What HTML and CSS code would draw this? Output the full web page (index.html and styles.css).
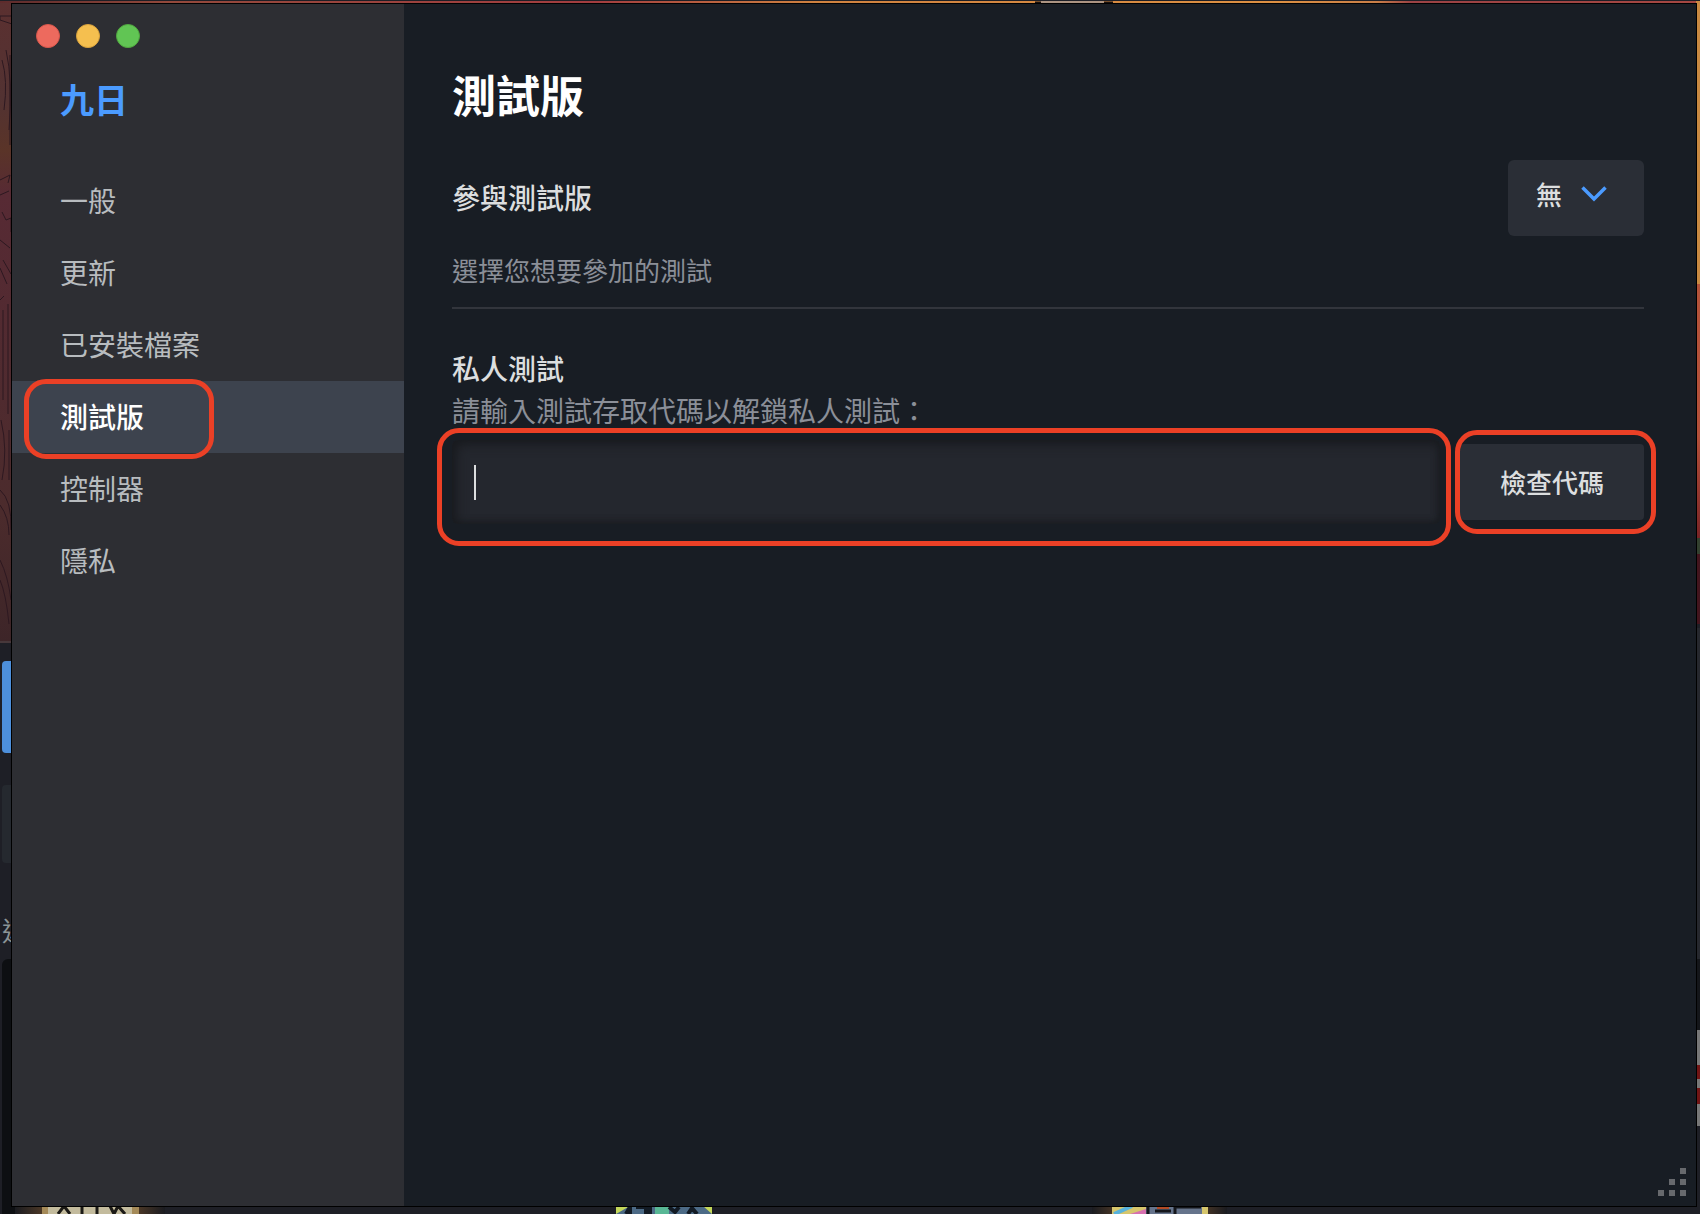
FILE: index.html
```
<!DOCTYPE html>
<html lang="zh-Hant">
<head>
    <meta charset="UTF-8">
    <meta name="viewport" content="width=device-width, initial-scale=1.0">
    <title>九日 - 測試版</title>
    <link rel="stylesheet" href="styles.css">
</head>
<body>
    <!-- 視窗後方的背景 -->
    <svg class="backdrop" viewBox="0 0 1700 1214" preserveAspectRatio="none" aria-hidden="true">
        <defs>
            <linearGradient id="top-art">
                <stop offset="0" stop-color="#5d2b2c"/>
                <stop offset="0.1" stop-color="#93493c"/>
                <stop offset="0.35" stop-color="#a33d40"/>
                <stop offset="0.48" stop-color="#cf8240"/>
                <stop offset="0.75" stop-color="#dc9043"/>
                <stop offset="0.81" stop-color="#c97f48"/>
                <stop offset="0.83" stop-color="#9b4245"/>
                <stop offset="1" stop-color="#a54742"/>
            </linearGradient>
            <linearGradient id="left-art" x2="0" y2="1">
                <stop offset="0" stop-color="#5b3030"/>
                <stop offset="0.15" stop-color="#523232"/>
                <stop offset="0.23" stop-color="#5a3428"/>
                <stop offset="0.3" stop-color="#572a34"/>
                <stop offset="0.8" stop-color="#4b2b2c"/>
                <stop offset="1" stop-color="#3d2528"/>
            </linearGradient>
            <linearGradient id="right-art" x2="0" y2="1">
                <stop offset="0" stop-color="#b4533a"/>
                <stop offset="0.6" stop-color="#b4503a"/>
                <stop offset="1" stop-color="#7a2426"/>
            </linearGradient>
            <linearGradient id="glow">
                <stop offset="0" stop-color="#1a1b20"/>
                <stop offset="0.3" stop-color="#6b4a2a"/>
                <stop offset="0.7" stop-color="#6b4a2a"/>
                <stop offset="1" stop-color="#1a1b20"/>
            </linearGradient>
        </defs>
        <rect width="1700" height="1214" fill="#1e1f26"/>
        <rect y="1" width="1700" height="5" fill="url(#top-art)"/>
        <rect y="3" width="12" height="639" fill="url(#left-art)"/>
        <path d="M0 16h12v8l-12-4zM2 60q6 20 2 50M6 50q7 30 3 80M10 55v90M0 180l10-5-2 8M0 195l9-4M2 212l4 8 5-2v14M0 240l10 8M3 260l8 14M0 268l7 16M0 300l4-4M3 310v90M8 304v110M1 420q7 30 1 60M9 430v50M0 490q12 10 11 40M0 505q9 12 9 30M0 560q8 16 11 40M0 580q6 14 9 44" fill="none" stroke="#2d1820" stroke-width="1"/>
        <path d="M0 642h12" stroke="#47383b" stroke-width="2"/>
        <rect x="2" y="661" width="20" height="92" rx="4" fill="#4d8fdb"/>
        <rect x="2" y="785" width="20" height="78" rx="4" fill="#25292f"/>
        <rect x="2" y="959" width="20" height="280" rx="6" fill="#0d0f12"/>
        <text class="backdrop-text" x="2" y="941">近</text>
        <path d="M1037 4l4-3h62l6 3z" fill="#ac9482"/>
        <path d="M1035 3h6M1104 3h9" stroke="#17100e" stroke-width="3"/>
        <rect x="1696" y="1" width="4" height="283" fill="#c98a42"/>
        <rect x="1696" y="284" width="4" height="254" fill="url(#right-art)"/>
        <rect x="1696" y="538" width="4" height="16" fill="#33402f"/>
        <rect x="1696" y="554" width="4" height="70" fill="#43151e"/>
        <rect x="1696" y="628" width="4" height="331" fill="#26282e"/>
        <rect x="1696" y="959" width="4" height="71" fill="#14161a"/>
        <rect x="1696" y="1030" width="4" height="96" fill="#777"/>
        <path d="M1698 1065v14M1698 1088v16" stroke="#721515" stroke-width="4"/>
        <!-- 下方露出的成就圖示 -->
        <rect x="15" y="1206" width="150" height="8" fill="url(#glow)"/>
        <rect x="42" y="1206" width="97" height="8" fill="#a58a58"/>
        <rect x="48" y="1206" width="84" height="8" fill="#c3bb9d"/>
        <path d="M58 1214l6-8 6 8M82 1206v8M97 1206v8M110 1206l4 8 4-8 7 8" fill="none" stroke="#1c1a16" stroke-width="3"/>
        <rect x="616" y="1206" width="96" height="8" fill="#4c6a86"/>
        <path d="M616 1214v-8h14zM712 1214v-8h-9z" fill="#c5d85a"/>
        <rect x="655" y="1206" width="14" height="8" fill="#58b795"/>
        <path d="M626 1214l4-7v7M636 1207h10v7M650 1207v7M669 1207l6 5 4-5M688 1214l4-6 5 6" fill="none" stroke="#121a24" stroke-width="4"/>
        <rect x="1092" y="1206" width="135" height="8" fill="url(#glow)"/>
        <rect x="1112" y="1206" width="96" height="8" fill="#d6c66c"/>
        <path d="M1114 1214l18-8" stroke="#57b2dc" stroke-width="4"/>
        <path d="M1130 1214l16-5v5z" fill="#d770b0"/>
        <rect x="1146" y="1206" width="56" height="8" fill="#65738b"/>
        <path d="M1148 1206v8M1155 1211h16M1175 1214v-7h26" fill="none" stroke="#14161b" stroke-width="3"/>
        <rect x="1157" y="1206" width="12" height="3" fill="#b44b25"/>
    </svg>

    <div class="window">
        <aside class="sidebar">
            <div class="traffic-lights">
                <button class="light close" aria-label="關閉"></button>
                <button class="light minimize" aria-label="最小化"></button>
                <button class="light zoom" aria-label="縮放"></button>
            </div>
            <div class="game-title">九日</div>
            <nav class="nav">
                <a class="nav-item" href="#">一般</a>
                <a class="nav-item" href="#">更新</a>
                <a class="nav-item" href="#">已安裝檔案</a>
                <a class="nav-item active" href="#" aria-current="page">測試版</a>
                <a class="nav-item" href="#">控制器</a>
                <a class="nav-item" href="#">隱私</a>
            </nav>
        </aside>

        <main class="content">
            <h1 class="page-title">測試版</h1>

            <section class="beta-section">
                <div class="beta-row">
                    <label class="label" for="beta-select">參與測試版</label>
                    <div class="dropdown">
                        <select class="dropdown-select" id="beta-select">
                            <option>無</option>
                        </select>
                        <svg class="chevron" viewBox="0 0 26 16" aria-hidden="true">
                            <path d="M1.500 1.500L13 13L24.500 1.500" fill="none" stroke="#4b9bff" stroke-width="3.500"/>
                        </svg>
                    </div>
                </div>
                <p class="description">選擇您想要參加的測試</p>
            </section>

            <section class="private-section">
                <h2 class="label">私人測試</h2>
                <label class="hint" for="beta-code">請輸入測試存取代碼以解鎖私人測試：</label>
                <div class="code-row">
                    <div class="code-field">
                        <input class="code-input" id="beta-code" type="text" autocomplete="off">
                        <span class="caret"></span>
                    </div>
                    <div class="code-action">
                        <button class="code-button" type="button">檢查代碼</button>
                    </div>
                </div>
            </section>
        </main>

        <svg class="resize-grip" viewBox="0 0 28 28" aria-hidden="true">
            <path d="M22 0h6v6h-6zM11 11h6v6h-6zM22 11h6v6h-6zM0 22h6v6h-6zM11 22h6v6h-6zM22 22h6v6h-6z" fill="#67696d"/>
        </svg>
    </div>
</body>
</html>
```
FILE: styles.css
```
*, *::after {
    box-sizing: border-box;
}

body {
    margin: 0;
    height: 100vh;
    padding: 3px 3px 7px 11px;
    display: flex;
    overflow: hidden;
    background: #1e1f26;
    color: #dcdedf;
    font-family: "Noto Sans CJK TC", sans-serif;
    font-size: 28px;
}

h1, h2, p {
    margin: 0;
}

button, input, select {
    font: inherit;
    color: inherit;
    border: none;
    outline: none;
}

/* 背景 */
.backdrop {
    position: absolute;
    top: 0;
    left: 0;
    width: 100%;
    height: 100%;
}

.backdrop-text {
    font-size: 26px;
    fill: #8b9496;
}

/* 視窗 */
.window {
    position: relative;
    flex: 1;
    display: flex;
    border: 1px solid #000;
    background: #181d24;
}

/* 側邊欄 */
.sidebar {
    width: 392px;
    flex-shrink: 0;
    padding-top: 20px;
    background: #2d2e33;
}

.traffic-lights {
    display: flex;
    gap: 16px;
    padding: 0 24px;
}

.light {
    width: 24px;
    height: 24px;
    padding: 0;
    border-radius: 50%;
}

.close {
    background: #ed6a5e;
    border: 1px solid #d8564b;
}

.minimize {
    background: #f5bf4f;
    border: 1px solid #d9a23c;
}

.zoom {
    background: #61c554;
    border: 1px solid #50a73f;
}

.game-title {
    padding: 27px 48px 42px;
    color: #4b9bff;
    font-size: 34px;
    font-weight: bold;
    line-height: 48px;
}

.nav-item {
    position: relative;
    display: block;
    padding: 0 48px 2px;
    color: #b8bcbf;
    line-height: 70px;
    text-decoration: none;
}

.nav-item.active {
    background: #3d434e;
    color: #fff;
    font-weight: 500;
}

/* 紅色標示框 */
.nav-item.active::after,
.code-field::after,
.code-action::after {
    content: "";
    position: absolute;
    border: 5px solid #eb4026;
    border-radius: 22px;
    pointer-events: none;
}

.nav-item.active::after {
    top: -2px;
    bottom: -6px;
    left: 12px;
    width: 190px;
}

.code-field::after {
    top: -12px;
    right: -11px;
    bottom: -22px;
    left: -15px;
}

.code-action::after {
    top: -14px;
    right: -12px;
    bottom: -14px;
    left: -5px;
}

/* 主內容 */
.content {
    flex: 1;
    min-width: 0;
    padding: 58px 52px 0 48px;
}

.page-title {
    color: #fff;
    font-size: 44px;
    font-weight: bold;
    line-height: 64px;
}

.beta-section {
    padding: 34px 0 17px;
    border-bottom: 2px solid #32353c;
}

.beta-row {
    display: flex;
    justify-content: space-between;
    align-items: center;
}

.label {
    padding-bottom: 2px;
    font-size: 28px;
    font-weight: 500;
    line-height: 40px;
}

.dropdown {
    position: relative;
}

.dropdown-select {
    display: block;
    appearance: none;
    width: 136px;
    height: 76px;
    padding: 0 28px 10px;
    border-radius: 6px;
    background: #2a2e36;
    font-size: 26px;
    font-weight: 500;
}

.chevron {
    position: absolute;
    top: 26px;
    right: 37px;
    width: 26px;
    height: 16px;
    pointer-events: none;
}

.description {
    padding-top: 14px;
    color: #8b8f98;
    font-size: 26px;
    line-height: 40px;
}

.private-section {
    padding-top: 39px;
}

.hint {
    display: block;
    color: #8b8f98;
    line-height: 40px;
}

.code-row {
    display: flex;
    align-items: center;
    gap: 20px;
    padding-top: 10px;
}

.code-field {
    position: relative;
    flex: 1;
}

.code-input {
    display: block;
    width: 100%;
    height: 84px;
    padding: 0 22px;
    border-radius: 6px;
    background: #24272e;
    box-shadow: inset 4px 4px 12px #181a1e, inset -2px -2px 6px #1a1d22;
    caret-color: transparent;
}

.caret {
    position: absolute;
    top: 25px;
    left: 22px;
    width: 2px;
    height: 35px;
    background: #dcdedf;
}

.code-action {
    position: relative;
}

.code-button {
    display: block;
    width: 184px;
    height: 76px;
    padding: 0 0 2px;
    border-radius: 4px;
    background: #2a2e36;
    font-size: 26px;
    font-weight: 500;
}

.resize-grip {
    position: absolute;
    right: 10px;
    bottom: 10px;
    width: 28px;
    height: 28px;
}
```
